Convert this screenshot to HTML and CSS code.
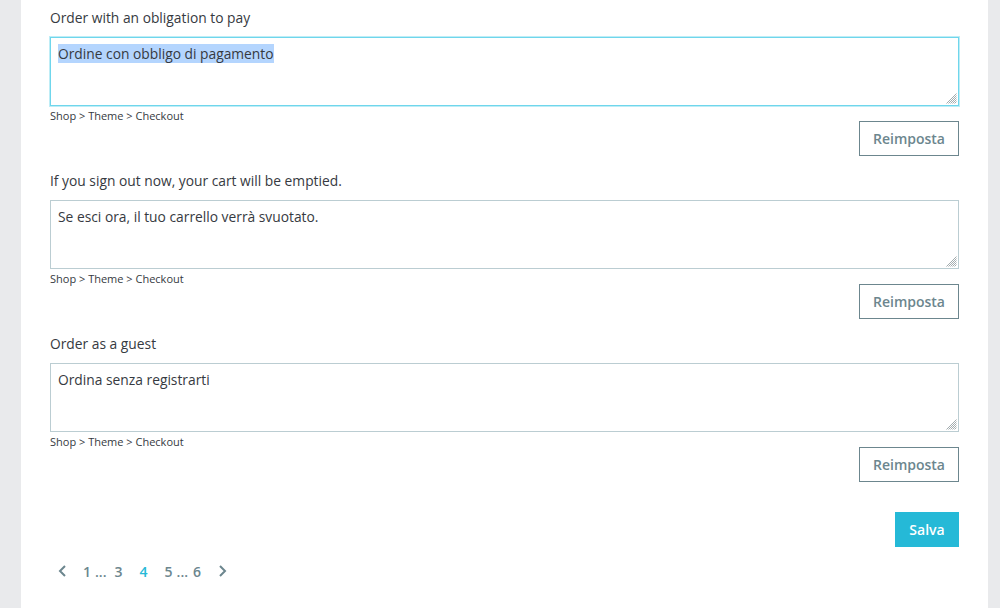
FILE: index.html
```html
<!DOCTYPE html>
<html lang="it">
<head>
  <meta charset="UTF-8" />
  <title>Traduzioni - Checkout</title>
  <link rel="stylesheet" href="styles.css">
</head>
<body>
  <div class="panel">
    <div class="field">
      <div class="field-label">Order with an obligation to pay</div>
      <div class="box focused">
        <span class="selected">Ordine con obbligo di pagamento</span>
        <svg class="grip" width="12" height="12" viewBox="0 0 12 12"><path d="M11.5 1.5 L1.5 11.5 M11.5 3.5 L3.5 11.5 M11.5 5.5 L5.5 11.5 M11.5 7.5 L7.5 11.5 M11.5 9.5 L9.5 11.5" stroke="#a3acaf" stroke-width="1" fill="none"/></svg>
      </div>
      <div class="hint">Shop &gt; Theme &gt; Checkout</div>
      <div class="actions"><button class="btn-outline">Reimposta</button></div>
    </div>

    <div class="field">
      <div class="field-label">If you sign out now, your cart will be emptied.</div>
      <div class="box">
        Se esci ora, il tuo carrello verrà svuotato.
        <svg class="grip" width="12" height="12" viewBox="0 0 12 12"><path d="M11.5 1.5 L1.5 11.5 M11.5 3.5 L3.5 11.5 M11.5 5.5 L5.5 11.5 M11.5 7.5 L7.5 11.5 M11.5 9.5 L9.5 11.5" stroke="#a3acaf" stroke-width="1" fill="none"/></svg>
      </div>
      <div class="hint">Shop &gt; Theme &gt; Checkout</div>
      <div class="actions"><button class="btn-outline">Reimposta</button></div>
    </div>

    <div class="field">
      <div class="field-label">Order as a guest</div>
      <div class="box">
        Ordina senza registrarti
        <svg class="grip" width="12" height="12" viewBox="0 0 12 12"><path d="M11.5 1.5 L1.5 11.5 M11.5 3.5 L3.5 11.5 M11.5 5.5 L5.5 11.5 M11.5 7.5 L7.5 11.5 M11.5 9.5 L9.5 11.5" stroke="#a3acaf" stroke-width="1" fill="none"/></svg>
      </div>
      <div class="hint">Shop &gt; Theme &gt; Checkout</div>
      <div class="actions"><button class="btn-outline">Reimposta</button></div>
    </div>

    <div class="save-row"><button class="btn-primary">Salva</button></div>

    <nav class="pager">
      <svg class="chev" width="10" height="14" viewBox="0 0 10 14"><path d="M7 2 L2 7 L7 12" stroke="#6c868e" stroke-width="2" fill="none"/></svg>
      <span class="page">1</span>
      <span class="dots">...</span>
      <span class="page">3</span>
      <span class="page active">4</span>
      <span class="page">5</span>
      <span class="dots">...</span><span class="page six">6</span>
      <svg class="chev next" width="10" height="14" viewBox="0 0 10 14"><path d="M3 2 L8 7 L3 12" stroke="#6c868e" stroke-width="2" fill="none"/></svg>
    </nav>
  </div>
</body>
</html>
```

FILE: styles.css
```css
body {
  margin: 0;
  background: #e9eaec;
  font-family: "Open Sans", "Liberation Sans", sans-serif;
  color: #363a41;
}

.panel {
  margin: 0 12px 0 21px;
  background: #fff;
  padding: 8px 29px 40px 29px;
  min-height: 560px;
}

.field {
  margin-bottom: 15px;
}

.field-label {
  font-size: 13.8px;
  line-height: 20px;
  margin-bottom: 9px;
}

.box {
  position: relative;
  height: 55px;
  border: 1px solid #bbcdd2;
  padding: 6px 7px;
  font-size: 13.8px;
  line-height: 20px;
}

.box.focused {
  border-color: #6fd6ec;
  box-shadow: 0 0 0 1px rgba(111, 214, 236, 0.45);
}

.selected {
  background: #b4d5fe;
}

.grip {
  position: absolute;
  right: 1px;
  bottom: 1px;
}

.hint {
  font-size: 11px;
  line-height: 10px;
  margin-top: 5px;
}

.actions {
  display: flex;
  justify-content: flex-end;
}

.btn-outline {
  width: 100px;
  height: 35px;
  background: #fff;
  border: 1px solid #6c868e;
  color: #6c868e;
  font-family: "Open Sans", "Liberation Sans", sans-serif;
  font-size: 14px;
  font-weight: 600;
  padding: 0;
}

.save-row {
  display: flex;
  justify-content: flex-end;
  margin-top: 30px;
}

.btn-primary {
  width: 64px;
  height: 35px;
  background: #25b9d7;
  border: 1px solid #25b9d7;
  color: #fff;
  font-family: "Open Sans", "Liberation Sans", sans-serif;
  font-size: 14px;
  font-weight: 600;
  padding: 0;
}

.pager {
  display: flex;
  align-items: center;
  margin-top: 14px;
  padding-left: 8px;
  height: 20px;
  font-size: 14px;
  font-weight: 600;
  color: #6c868e;
}

.chev {
  margin-right: 15px;
}

.chev.next {
  margin-left: 12px;
  margin-right: 0;
}

.page {
  margin-right: 4px;
}

.dots {
  margin-right: 8px;
}

.page + .page {
  margin-left: 13px;
}

.page.active {
  color: #25b9d7;
}

.page.six {
  margin-left: -3px;
}
```
